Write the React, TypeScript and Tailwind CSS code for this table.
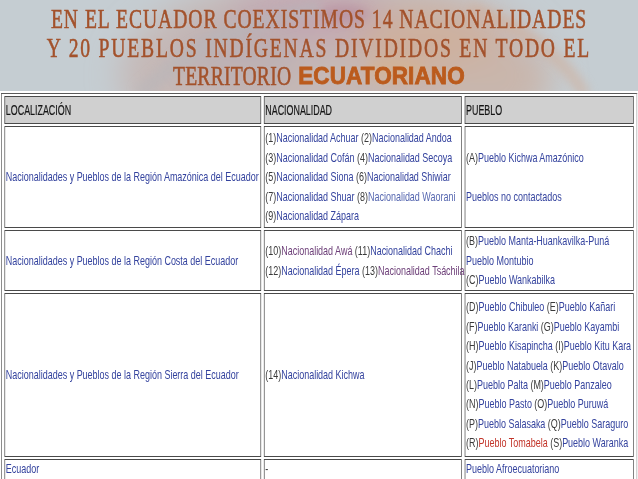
import React from 'react'

type Seg = [string, string]
type Line = Seg[]

const N = 'text-[#3a3a3a]'
const B = 'text-[#34439e]'
const P = 'text-[#6d3f78]'
const L = 'text-[#5667b0]'
const R = 'text-[#c2352a]'

const amazonNac: Line[] = [
  [['(1)', N], ['Nacionalidad Achuar', B], [' (2)', N], ['Nacionalidad Andoa', B]],
  [['(3)', N], ['Nacionalidad Cofán', B], [' (4)', N], ['Nacionalidad Secoya', B]],
  [['(5)', N], ['Nacionalidad Siona', B], [' (6)', N], ['Nacionalidad Shiwiar', B]],
  [['(7)', N], ['Nacionalidad Shuar', B], [' (8)', N], ['Nacionalidad Waorani', L]],
  [['(9)', N], ['Nacionalidad Zápara', B]],
]

const amazonPue: Line[] = [
  [['(A)', N], ['Pueblo Kichwa Amazónico', B]],
  [['\u00a0', N]],
  [['Pueblos no contactados', B]],
]

const costaNac: Line[] = [
  [['(10)', N], ['Nacionalidad Awá', P], [' (11)', N], ['Nacionalidad Chachi', B]],
  [['(12)', N], ['Nacionalidad Épera', B], [' (13)', N], ['Nacionalidad Tsáchila', P]],
]

const costaPue: Line[] = [
  [['(B)', N], ['Pueblo Manta-Huankavilka-Puná', B]],
  [['Pueblo Montubio', B]],
  [['(C)', N], ['Pueblo Wankabilka', B]],
]

const sierraPue: Line[] = [
  [['(D)', N], ['Pueblo Chibuleo', B], [' (E)', N], ['Pueblo Kañari', B]],
  [['(F)', N], ['Pueblo Karanki', B], [' (G)', N], ['Pueblo Kayambi', B]],
  [['(H)', N], ['Pueblo Kisapincha', B], [' (I)', N], ['Pueblo Kitu Kara', B]],
  [['(J)', N], ['Pueblo Natabuela', B], [' (K)', N], ['Pueblo Otavalo', B]],
  [['(L)', N], ['Pueblo Palta', B], [' (M)', N], ['Pueblo Panzaleo', B]],
  [['(N)', N], ['Pueblo Pasto', B], [' (O)', N], ['Pueblo Puruwá', B]],
  [['(P)', N], ['Pueblo Salasaka', B], [' (Q)', N], ['Pueblo Saraguro', B]],
  [['(R)', N], ['Pueblo Tomabela', R], [' (S)', N], ['Pueblo Waranka', B]],
]

function Lines({ lines }: { lines: Line[] }) {
  return (
    <div className="flex flex-col leading-[19.4px]">
      {lines.map((line, i) => (
        <div key={i} className="whitespace-nowrap">
          {line.map(([t, c], j) => (
            <span key={j} className={c}>
              {t}
            </span>
          ))}
        </div>
      ))}
    </div>
  )
}

function Backdrop() {
  return (
    <svg className="absolute inset-0 w-full h-full" viewBox="0 0 638 479" preserveAspectRatio="none">
      <defs>
        <filter id="blur" x="-30%" y="-30%" width="160%" height="160%">
          <feGaussianBlur stdDeviation="16" />
        </filter>
        <filter id="blur2" x="-30%" y="-30%" width="160%" height="160%">
          <feGaussianBlur stdDeviation="5" />
        </filter>
      </defs>
      <rect width="638" height="479" fill="#c5cdd2" />
      <g filter="url(#blur)">
        <ellipse cx="335" cy="75" rx="215" ry="100" fill="#c5b8b6" />
        <ellipse cx="310" cy="15" rx="80" ry="28" fill="#c2a6b0" />
        <ellipse cx="430" cy="45" rx="75" ry="38" fill="#cdb09f" />
        <ellipse cx="240" cy="55" rx="60" ry="35" fill="#bdb0b3" />
        <ellipse cx="500" cy="80" rx="55" ry="25" fill="#c9b6ab" />
      </g>
      <g filter="url(#blur2)" opacity="0.55">
        <path d="M140 95 Q210 25 320 8" stroke="#b8b6ba" strokeWidth="16" fill="none" />
        <path d="M470 8 Q555 40 585 95" stroke="#d0ae9a" strokeWidth="12" fill="none" />
        <ellipse cx="345" cy="14" rx="24" ry="9" fill="#b58c9c" />
        <ellipse cx="395" cy="70" rx="30" ry="12" fill="#d6b28f" />
      </g>
    </svg>
  )
}

const cell = 'border border-[#4a4a4a] px-[1px]'
const head = 'inline-block origin-left scale-x-[0.86] whitespace-nowrap'

export default function App() {
  return (
    <div className="relative w-[638px] h-[479px] overflow-hidden font-['Liberation_Sans',Arial,sans-serif]">
      <Backdrop />
      <div className="relative flex flex-col h-full">
        <div className="shrink-0 h-[91px] pt-[5px] flex flex-col items-center text-[28px] leading-[28.5px] text-[#a3522c] [-webkit-text-stroke:0.6px_#a3522c] font-['Liberation_Serif',serif] whitespace-nowrap">
          <div className="flex justify-center w-full">
            <span className="inline-block scale-x-[0.7] tracking-[1.4px]">
              EN EL ECUADOR COEXISTIMOS 14 NACIONALIDADES
            </span>
          </div>
          <div className="flex justify-center w-full">
            <span className="inline-block scale-x-[0.7] tracking-[2.6px]">
              Y 20 PUEBLOS INDÍGENAS DIVIDIDOS EN TODO EL
            </span>
          </div>
          <div className="flex items-baseline justify-center w-full">
            <span className="inline-block w-[120px]">
              <span className="inline-block origin-left scale-x-[0.7] tracking-[0.3px]">TERRITORIO</span>
            </span>
            <span className="inline-block w-[5px]" />
            <span className="inline-block origin-bottom scale-y-[1.1] font-['Liberation_Sans',sans-serif] font-black text-[22.5px] tracking-[0.1px] text-[#bb5b1d] [-webkit-text-stroke:0.8px_#bb5b1d]">
              ECUATORIANO
            </span>
          </div>
        </div>
        <div className="flex-1 bg-white pt-[2px] pl-[1px]">
          <table className="w-[922px] origin-top-left scale-x-[0.69] table-fixed border-separate border-spacing-x-[4px] border-spacing-y-[2px] border border-t-[#5a5a5a] border-l-[#5a5a5a] border-b-[#a8a8a8] border-r-[#a8a8a8] text-[13px]">
            <colgroup>
              <col className="w-[372px]" />
              <col className="w-[287px]" />
              <col />
            </colgroup>
            <tbody>
              <tr className="h-[28px] bg-[#d0d0d0] text-[#151515] text-[15px] [-webkit-text-stroke:0.2px_#151515]">
                <td className={cell}>
                  <span className={head}>LOCALIZACIÓN</span>
                </td>
                <td className={cell}>
                  <span className={head}>NACIONALIDAD</span>
                </td>
                <td className={cell}>
                  <span className={head}>PUEBLO</span>
                </td>
              </tr>
              <tr className="h-[102px]">
                <td className={`${cell} whitespace-nowrap text-[#34439e]`}>
                  Nacionalidades y Pueblos de la Región Amazónica del Ecuador
                </td>
                <td className={cell}>
                  <Lines lines={amazonNac} />
                </td>
                <td className={cell}>
                  <Lines lines={amazonPue} />
                </td>
              </tr>
              <tr className="h-[61px]">
                <td className={`${cell} whitespace-nowrap text-[#34439e]`}>
                  Nacionalidades y Pueblos de la Región Costa del Ecuador
                </td>
                <td className={cell}>
                  <Lines lines={costaNac} />
                </td>
                <td className={cell}>
                  <Lines lines={costaPue} />
                </td>
              </tr>
              <tr className="h-[164px]">
                <td className={`${cell} whitespace-nowrap text-[#34439e]`}>
                  Nacionalidades y Pueblos de la Región Sierra del Ecuador
                </td>
                <td className={cell}>
                  <span className={N}>(14)</span>
                  <span className={B}>Nacionalidad Kichwa</span>
                </td>
                <td className={cell}>
                  <Lines lines={sierraPue} />
                </td>
              </tr>
              <tr className="h-[22px] align-top leading-[17px]">
                <td className={`${cell} text-[#34439e]`}>Ecuador</td>
                <td className={`${cell} text-[#333]`}>-</td>
                <td className={`${cell} text-[#34439e]`}>Pueblo Afroecuatoriano</td>
              </tr>
            </tbody>
          </table>
        </div>
      </div>
    </div>
  )
}
